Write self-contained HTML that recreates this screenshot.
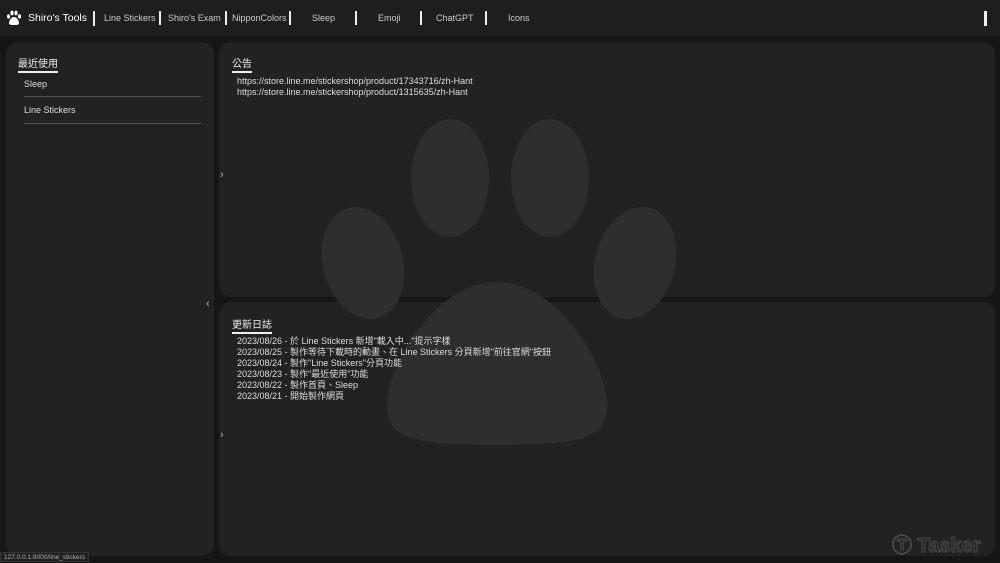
<!DOCTYPE html><html><head><meta charset="utf-8"><style>
*{margin:0;padding:0;box-sizing:border-box}
body{width:1000px;height:562px;background:#161616;font-family:"Liberation Sans","Noto Sans CJK TC",sans-serif;color:#ddd;position:relative;overflow:hidden}
.nav{position:absolute;left:0;top:0;width:1000px;height:36px;background:#1e1e1e}
.nav span{position:absolute;top:13px;font-size:9px;color:#ccc}
.bar{position:absolute;top:11px;width:2px;height:14px;background:#eee}
.panel{position:absolute;background:#222;border-radius:12px}
h3{position:absolute;font-size:10px;font-weight:normal;color:#eee;border-bottom:2px solid #eee;padding-bottom:1px}
.t{position:absolute;font-size:9px;color:#ddd;line-height:11px}
.hr{position:absolute;left:24px;width:177px;height:1px;background:#555}
.chev{position:absolute;font-size:11px;color:#aaa}
</style></head><body>
<div class="nav">
<svg style="position:absolute;left:6px;top:10px" width="16" height="16" viewBox="0 0 16 16" fill="#fff"><ellipse cx="6" cy="3" rx="1.6" ry="2.4"/><ellipse cx="10" cy="3" rx="1.6" ry="2.4"/><ellipse cx="2.5" cy="6.5" rx="1.5" ry="2.2"/><ellipse cx="13.5" cy="6.5" rx="1.5" ry="2.2"/><path d="M8 7c-3 0-5 4-5 6s2 2 5 2 5 0 5-2-2-6-5-6z"/></svg>
<span style="left:28px;top:12px;font-size:10.5px;color:#fff">Shiro's Tools</span>
<div class="bar" style="left:93px;height:15px"></div>
<span style="left:104px">Line Stickers</span><div class="bar" style="left:159px"></div>
<span style="left:168px">Shiro's Exam</span><div class="bar" style="left:225px"></div>
<span style="left:232px">NipponColors</span><div class="bar" style="left:289px"></div>
<span style="left:312px">Sleep</span><div class="bar" style="left:355px"></div>
<span style="left:378px">Emoji</span><div class="bar" style="left:420px"></div>
<span style="left:436px">ChatGPT</span><div class="bar" style="left:485px"></div>
<span style="left:508px">Icons</span>
<div class="bar" style="left:984px;width:3px;height:15px"></div>
</div>
<div class="panel" style="left:6px;top:42px;width:208px;height:514px"></div>
<div class="panel" style="left:219px;top:42px;width:776px;height:255px"></div>
<div class="panel" style="left:219px;top:302px;width:776px;height:254px"></div>
<svg style="position:absolute;left:0;top:0" width="1000" height="562" fill="#2e2e2e"><ellipse cx="450" cy="178" rx="39" ry="59"/><ellipse cx="550" cy="178" rx="39" ry="59"/><ellipse cx="363" cy="263" rx="40" ry="57" transform="rotate(-15 363 263)"/><ellipse cx="635" cy="263" rx="40" ry="57" transform="rotate(15 635 263)"/><path d="M497 282c-60 0-110 80-110 125 0 35 40 38 110 38s110-3 110-38c0-45-50-125-110-125z"/></svg>
<h3 style="left:18px;top:55px">最近使用</h3>
<div class="t" style="left:24px;top:79px">Sleep</div><div class="hr" style="top:96px"></div>
<div class="t" style="left:24px;top:105px">Line Stickers</div><div class="hr" style="top:123px"></div>
<h3 style="left:232px;top:55px">公告</h3>
<div class="t" style="left:237px;top:76px">https://store.line.me/stickershop/product/17343716/zh-Hant<br>https://store.line.me/stickershop/product/1315635/zh-Hant</div>
<h3 style="left:232px;top:316px">更新日誌</h3>
<div class="t" style="left:237px;top:336px">2023/08/26 - 於 Line Stickers 新增"載入中..."提示字樣<br>2023/08/25 - 製作等待下載時的動畫、在 Line Stickers 分頁新增"前往官網"按鈕<br>2023/08/24 - 製作"Line Stickers"分頁功能<br>2023/08/23 - 製作"最近使用"功能<br>2023/08/22 - 製作首頁、Sleep<br>2023/08/21 - 開始製作網頁</div>
<div class="chev" style="left:220px;top:169px">›</div>
<div class="chev" style="left:206px;top:298px">‹</div>
<div class="chev" style="left:220px;top:429px">›</div>
<div style="position:absolute;left:892px;top:529px;font-size:20px;font-weight:bold;color:#262626;-webkit-text-stroke:1px #4a4a4a">Ⓣ Tasker</div>
<div style="position:absolute;left:0;top:552px;height:10px;padding:0 3px;background:#222;color:#aaa;font-size:6.5px;line-height:10px;border:1px solid #333">127.0.0.1:8000/line_stickers</div>
</body></html>
